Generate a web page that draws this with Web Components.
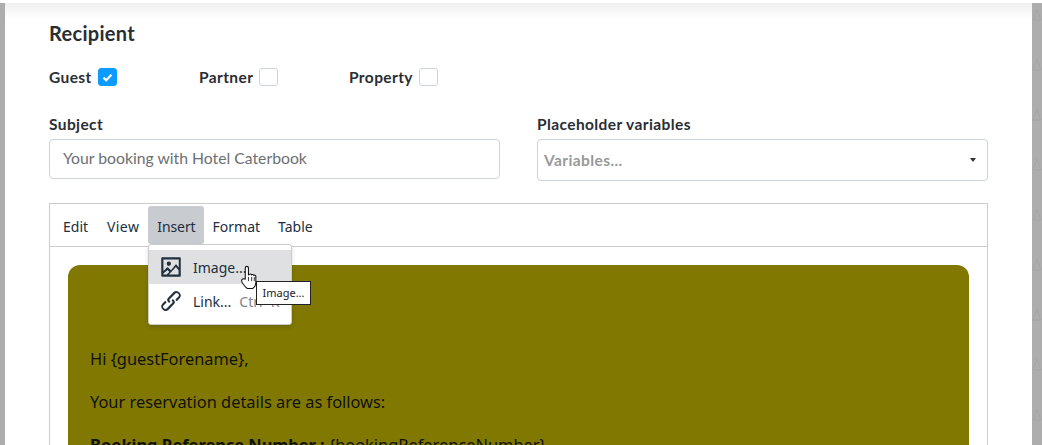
<!DOCTYPE html>
<html>
<head>
<meta charset="utf-8">
<title>Email template</title>
<style>
  html, body { margin: 0; height: 445px; overflow: hidden; background: #fff; }
  body { font-family: "Open Sans", "Noto Sans", sans-serif; color: #212529; }
</style>
</head>
<body>
<template-page>
  <section-title>Recipient</section-title>
  <recipient-row>
    <check-field label="Guest" checked></check-field>
    <check-field label="Partner"></check-field>
    <check-field label="Property"></check-field>
  </recipient-row>
  <form-row>
    <text-field label="Subject" value="Your booking with Hotel Caterbook"></text-field>
    <select-field label="Placeholder variables" placeholder="Variables..."></select-field>
  </form-row>
  <mail-editor>
    <p>Hi {guestForename},</p>
    <p>Your reservation details are as follows:</p>
    <p><b>Booking Reference Number :</b> {bookingReferenceNumber}</p>
  </mail-editor>
</template-page>

<script>
'use strict';

const LABEL_FONT = `Lato, "Open Sans", sans-serif`;
const LABEL_STYLE = `font: 700 15.5px/20px ${LABEL_FONT}; letter-spacing: .4px; color: #2a2e33;`;

// page frame, grey backdrop on both sides and the shadow of the header on top
class TemplatePage extends HTMLElement {
  constructor() {
    super();
    this.attachShadow({mode: 'open'}).innerHTML = `
      <style>
        :host { display: flex; height: 445px; background: linear-gradient(#fff 3px, #adadad 3px); overflow: hidden; }
        .side { width: 5px; flex: none; }
        .side.right { width: 10px; }
        .side svg { display: block; }
        .panel { flex: 1; min-width: 0; background: #fff; padding: 3px 44px 0 44px; position: relative; }
        .panel::before {
          content: ""; position: absolute; left: 0; right: 0; top: 3px; height: 16px;
          background: linear-gradient(#efefef, #fff);
        }
        .content { position: relative; }
      </style>
      <div class="side"></div>
      <div class="panel"><div class="content"><slot></slot></div></div>
      <div class="side right">
        <svg width="10" height="445">
          <defs>
            <pattern id="tri" width="10" height="50" patternUnits="userSpaceOnUse">
              <path d="M5 9 1 20H9Z" fill="none" stroke="#a4a4a4"/>
            </pattern>
          </defs>
          <rect y="3" width="10" height="442" fill="url(#tri)"/>
        </svg>
      </div>
    `;
  }
}

class SectionTitle extends HTMLElement {
  constructor() {
    super();
    this.attachShadow({mode: 'open'}).innerHTML = `
      <style>
        :host {
          display: block; font: 700 20px/26px ${LABEL_FONT}; letter-spacing: .3px; color: #2a2e33;
          padding-top: 17px; margin-bottom: 21px;
        }
      </style><slot></slot>`;
  }
}

class RecipientRow extends HTMLElement {
  constructor() {
    super();
    this.attachShadow({mode: 'open'}).innerHTML = `
      <style>
        :host { display: grid; grid-template-columns: repeat(3, 150px); height: 20px; margin-bottom: 27px; }
      </style><slot></slot>`;
  }
}

class CheckField extends HTMLElement {
  constructor() {
    super();
    let on = this.hasAttribute('checked');
    this.attachShadow({mode: 'open'}).innerHTML = `
      <style>
        :host { display: flex; align-items: center; gap: 6px; ${LABEL_STYLE} }
        .box {
          box-sizing: border-box; width: 19px; height: 18px; border: 1px solid #ced4da; border-radius: 3px; background: #fff;
          display: flex; align-items: center; justify-content: center;
        }
        .box.on { background: #0d9bff; border-color: #0d9bff; }
      </style>
      <span>${this.getAttribute('label')}</span>
      <span class="box ${on ? 'on' : ''}">
        ${on ? '<svg width="11" height="9" viewBox="0 0 11 9"><path d="M1.500 4.600 4.200 7.200 9.500 1.800" fill="none" stroke="#fff" stroke-width="2.200"/></svg>' : ''}
      </span>`;
  }
}

class FormRow extends HTMLElement {
  constructor() {
    super();
    this.attachShadow({mode: 'open'}).innerHTML = `
      <style>
        :host { display: grid; grid-template-columns: 451px 451px; column-gap: 37px; align-items: start; height: 89px; }
      </style><slot></slot>`;
  }
}

class TextField extends HTMLElement {
  constructor() {
    super();
    this.attachShadow({mode: 'open'}).innerHTML = `
      <style>
        :host { display: block; }
        label { display: block; ${LABEL_STYLE} margin-bottom: 5px; }
        .input {
          box-sizing: border-box; height: 40px; border: 1px solid #ced4da; border-radius: 4px;
          padding: 0 13px 2px; display: flex; align-items: center;
          font: 400 15.75px/20px Lato, sans-serif; color: #6c6f73;
        }
      </style>
      <label>${this.getAttribute('label')}</label>
      <div class="input">${this.getAttribute('value')}</div>`;
  }
}

class SelectField extends HTMLElement {
  constructor() {
    super();
    this.attachShadow({mode: 'open'}).innerHTML = `
      <style>
        :host { display: block; }
        label { display: block; ${LABEL_STYLE} margin-bottom: 5px; }
        .select {
          box-sizing: border-box; height: 42px; border: 1px solid #ced4da; border-radius: 4px;
          padding: 0 11px 0 6px; display: flex; align-items: center; justify-content: space-between;
          ${LABEL_STYLE} color: #999;
        }
        .caret { width: 0; height: 0; border: 3.500px solid transparent; border-top: 4px solid #333; border-bottom: 0; }
      </style>
      <label>${this.getAttribute('label')}</label>
      <div class="select"><span>${this.getAttribute('placeholder')}</span><span class="caret"></span></div>`;
  }
}

// rich text editor with the Insert menu opened and hovered
class MailEditor extends HTMLElement {
  constructor() {
    super();
    this.attachShadow({mode: 'open'}).innerHTML = `
      <style>
        :host {
          display: block; position: relative; height: 260px; box-sizing: border-box;
          border: 1px solid #ccc; border-bottom: 0; font: 400 14px/20px "Noto Sans", "Open Sans", sans-serif; color: #222f3e;
        }
        .bar { display: flex; height: 40px; border-bottom: 1px solid #ccc; padding: 2px 0 0 4px; }
        .bar span {
          box-sizing: border-box; height: 38px; padding: 3px 9px 0; display: flex; align-items: center; border-radius: 3px;
        }
        .bar .view { letter-spacing: .4px; margin-left: 1px; }
        .bar .open { background: #c8cbcf; padding-right: 8px; letter-spacing: -.1px; }
        .body { padding: 18px 18px 0 18px; }
        .mail {
          background: #807800; border-radius: 12px; height: 300px; padding: 82px 22px 0 22px;
          font: 400 16.400px/24px "Noto Sans", "Open Sans", sans-serif; color: #111;
        }
        ::slotted(p) { margin: 0 0 19px 0; }
        .menu {
          position: absolute; left: 98px; top: 40px; width: 144px; height: 81px; box-sizing: border-box;
          background: #fff; border: 1px solid #ccc; border-radius: 3px; padding-top: 5px;
          box-shadow: 0 2px 4px rgba(0,0,0,.15);
        }
        .item { display: flex; align-items: center; height: 34px; padding-left: 9px; gap: 9px; white-space: nowrap; }
        .item span { padding-top: 2px; }
        .item.hover { background: #dee0e2; }
        .item svg { flex: none; }
        .key { color: #7e858d; margin-left: -1px; }
        .tip {
          position: absolute; left: 206px; top: 77px; width: 55px; height: 24px; box-sizing: border-box;
          background: #fff; border: 1px solid #222; font: 400 11px/22px "Noto Sans", sans-serif; color: #222;
          text-align: center;
        }
        .hand { position: absolute; left: 190px; top: 60px; }
      </style>
      <div class="bar">
        <span>Edit</span><span class="view">View</span><span class="open">Insert</span><span>Format</span><span>Table</span>
      </div>
      <div class="body"><div class="mail"><slot></slot></div></div>
      <div class="menu">
        <div class="item hover">
          <svg width="26" height="26" viewBox="0 0 24 24" fill="#222f3e">
            <path d="M5 15.700l3.300-3.200c.3-.3.700-.3 1 0L12 15l4.100-5c.3-.4.800-.4 1.100 0l2 2.500V5H5v10.700zM5 18v1h3l2.500-2.500-1.700-1.700L5 18zm14-3l-2.500-3-6.400 7H19v-4zM4 3h16c.6 0 1 .4 1 1v16c0 .6-.4 1-1 1H4a1 1 0 0 1-1-1V4c0-.6.400-1 1-1zm6 8a2 2 0 1 1 0-4 2 2 0 0 1 0 4z"/>
          </svg>
          <span>Image...</span>
        </div>
        <div class="item">
          <svg width="26" height="26" viewBox="0 0 24 24" fill="#222f3e">
            <path d="M6.200 12.300a1 1 0 0 1 1.400 1.400l-2 2a2 2 0 1 0 2.800 2.800l4.800-4.800a1 1 0 0 0 0-1.400 1 1 0 1 1 1.400-1.300 2.900 2.900 0 0 1 0 4L9.800 20a4 4 0 0 1-5.600-5.700l2-2zm11.600-.6a1 1 0 0 1-1.400-1.400l2-2a2 2 0 1 0-2.800-2.800L10.800 10.300a1 1 0 0 0 0 1.400 1 1 0 1 1-1.400 1.300 2.900 2.900 0 0 1 0-4L14.200 4a4 4 0 0 1 5.600 5.700l-2 2z"/>
          </svg>
          <span>Link...</span><span class="key">Ctrl+K</span>
        </div>
      </div>
      <div class="tip">Image...</div>
      <svg class="hand" width="19" height="28" viewBox="0 0 18 26">
        <path d="M5 14V3.500a1.500 1.500 0 0 1 3 0V10l1-.5a1.300 1.300 0 0 1 2 .5 1.300 1.300 0 0 1 2 .5 1.300 1.300 0 0 1 2 .7V17c0 3-1.500 5-3 6H7c-1.500-1-5.500-5.500-5.500-7.500 0-1.500 1.500-2 3.500-1.500Z" fill="#fff" stroke="#111" stroke-width="1"/>
        <path d="M8 12v4M11 12v4M13.500 12v4" stroke="#111" stroke-width=".8"/>
      </svg>`;
  }
}

customElements.define('template-page', TemplatePage);
customElements.define('section-title', SectionTitle);
customElements.define('recipient-row', RecipientRow);
customElements.define('check-field', CheckField);
customElements.define('form-row', FormRow);
customElements.define('text-field', TextField);
customElements.define('select-field', SelectField);
customElements.define('mail-editor', MailEditor);
</script>
</body>
</html>
